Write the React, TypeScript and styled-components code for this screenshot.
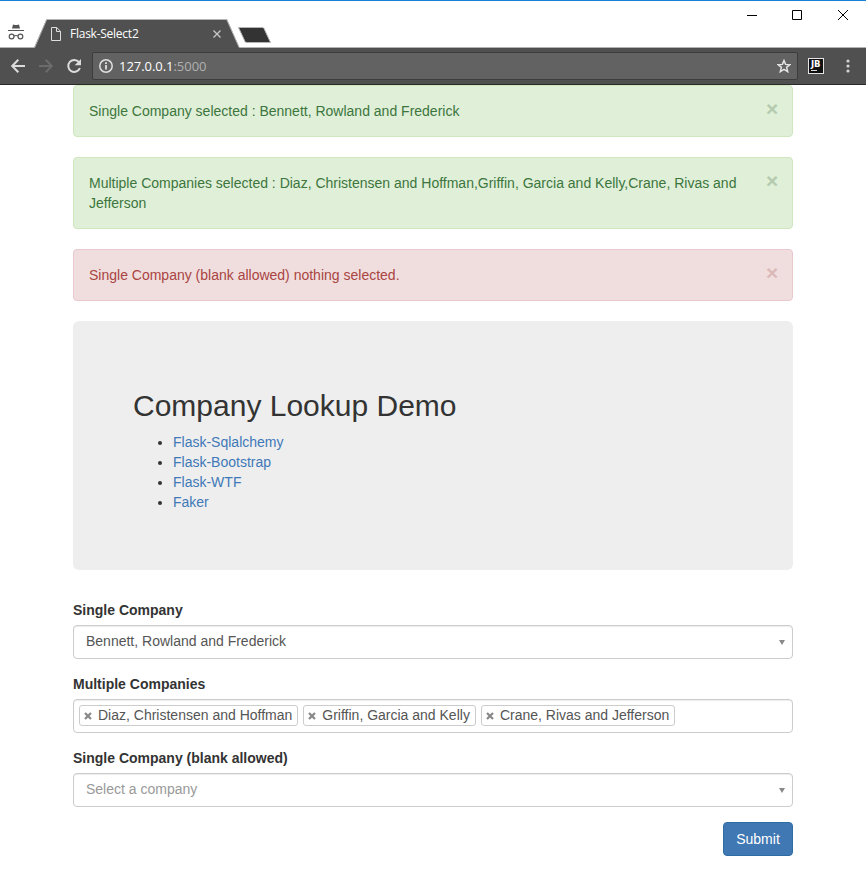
import React from 'react';
import styled, { createGlobalStyle } from 'styled-components';

const GlobalStyle = createGlobalStyle`
  *, *::before, *::after { box-sizing: border-box; }
  body {
    margin: 0;
    background: #fff;
    color: #333;
    font: 14px/20px "Liberation Sans", Arial, sans-serif;
  }
`;

/* ---------- Browser window ---------- */

const Window = styled.div`
  width: 866px;
  height: 877px;
  overflow: hidden;
  background: #fff;
`;

const TitleBar = styled.header`
  display: flex;
  align-items: flex-end;
  height: 48px;
  border-top: 1px solid #1a80d6;
  background: linear-gradient(#b2b4b3, #b2b4b3) bottom / 100% 1px no-repeat;
`;

const Incognito = styled.svg`
  flex: none;
  width: 16px;
  height: 17px;
  margin: 0 10px 7px 8px;
`;

const Tab = styled.div`
  position: relative;
  display: flex;
  align-items: center;
  width: 206px;
  height: 29px;
  padding: 0 18px 0 17px;
  color: #fff;
  font: 12px/16px "Open Sans", "Noto Sans", sans-serif;
`;

const TabShape = styled.svg`
  position: absolute;
  inset: 0;
`;

const TabIcon = styled.svg`
  position: relative;
  flex: none;
  width: 10px;
  height: 14px;
`;

const TabTitle = styled.span`
  position: relative;
  flex: 1;
  margin: 0 0 0 9px;
  letter-spacing: -0.25px;
  white-space: nowrap;
`;

const TabClose = styled.svg`
  position: relative;
  flex: none;
  width: 8px;
  height: 8px;
  margin-right: 1px;
`;

const NewTab = styled.svg`
  flex: none;
  width: 36px;
  height: 18px;
  margin: 0 auto 4px -3px;
`;

const WindowControls = styled.div`
  display: flex;
  align-self: flex-start;
  gap: 35px;
  padding: 9px 18px 0 0;
`;

const ControlIcon = styled.svg`
  width: 10px;
  height: 10px;
  &:last-child {
    margin-left: 1px;
  }
`;

const Toolbar = styled.nav`
  display: flex;
  align-items: center;
  height: 37px;
  padding: 0 12px 0 10px;
  background: #505050;
  border-bottom: 1px solid #2b292a;
`;

const NavIcon = styled.svg<{ $gap: number }>`
  flex: none;
  width: 16px;
  height: 16px;
  margin-right: ${(p) => p.$gap}px;
`;

const AddressBar = styled.div`
  display: flex;
  flex: 1;
  align-items: center;
  height: 28px;
  padding: 0 6px;
  border: 1px solid #3c3c3c;
  border-radius: 2px;
  background: #626262;
`;

const Url = styled.span`
  flex: 1;
  margin: -1px 0 0 6px;
  color: #b0b0b0;
  font: 13px/18px "Open Sans", "Noto Sans", sans-serif;
  letter-spacing: -0.04px;
`;

const Host = styled.span`
  color: #fff;
`;

const BarIcon = styled.svg`
  flex: none;
  width: 14px;
  height: 14px;
`;

const Extension = styled.div`
  width: 16px;
  height: 16px;
  margin: 0 22px 0 10px;
  padding: 1px 0 0 2px;
  border: 1px solid #e4e4e4;
  background: #111;
  color: #fff;
  font: bold 8.5px/8px "DejaVu Sans", sans-serif;
  letter-spacing: -0.2px;
  &::after {
    content: '';
    display: block;
    width: 6px;
    height: 1px;
    margin-top: 2px;
    background: #ddd;
  }
`;

const MenuIcon = styled.svg`
  flex: none;
  width: 4px;
  height: 14px;
  margin-right: 4px;
`;

/* ---------- Page ---------- */

const Container = styled.main`
  width: 720px;
  margin: 0 auto;
`;

const tones = {
  success: { text: '#3c763d', fill: '#e0efd8', line: '#d0e6bf', close: '#b5cbaf' },
  danger: { text: '#a94442', fill: '#f0dede', line: '#e9c8ce', close: '#dcb9b9' },
};

type Tone = keyof typeof tones;

const AlertBox = styled.div<{ $tone: Tone }>`
  display: flex;
  justify-content: space-between;
  align-items: flex-start;
  margin-bottom: 20px;
  padding: 15px 14px 15px 15px;
  border: 1px solid ${(p) => tones[p.$tone].line};
  border-radius: 4px;
  background: ${(p) => tones[p.$tone].fill};
  color: ${(p) => tones[p.$tone].text};
`;

const AlertText = styled.span`
  width: 655px;
`;

const DismissButton = styled.button<{ $tone: Tone }>`
  width: 12px;
  height: 21px;
  margin: -3px 0 -6px;
  padding: 0;
  border: 0;
  background: transparent;
  color: ${(p) => tones[p.$tone].close};
  font: bold 21px/21px "Liberation Sans", Arial, sans-serif;
`;

const Jumbotron = styled.section`
  margin-bottom: 30px;
  padding: 48px 60px;
  border-radius: 6px;
  background: #eee;
`;

const Heading = styled.h2`
  margin: 20px 0 10px;
  font-size: 30px;
  font-weight: 400;
  line-height: 33px;
`;

const LinkList = styled.ul`
  margin: 0 0 10px;
  padding-left: 40px;
`;

const Link = styled.a`
  color: #3f79b8;
  text-decoration: none;
`;

const Field = styled.div`
  margin-bottom: 15px;
`;

const Label = styled.label`
  display: block;
  margin-bottom: 5px;
  font-weight: 700;
`;

const SelectBox = styled.div<{ $multiple?: boolean; $empty?: boolean }>`
  display: flex;
  align-items: center;
  gap: 5px;
  height: 34px;
  padding: ${(p) => (p.$multiple ? '0 5px 1px' : '0 7px 2px 12px')};
  border: 1px solid #ccc;
  border-radius: 4px;
  box-shadow: inset 0 1px 1px rgba(0, 0, 0, 0.075);
  color: ${(p) => (p.$empty ? '#999' : '#555')};
`;

const Value = styled.span`
  flex: 1;
`;

const Caret = styled.span`
  margin-top: 2px;
  border: 3px solid transparent;
  border-top: 5px solid #888;
  border-bottom: 0;
`;

const Chip = styled.span`
  display: flex;
  align-items: center;
  height: 21px;
  padding: 0 5px 1px 4px;
  border: 1px solid #ccc;
  border-radius: 3px;
  white-space: nowrap;
`;

const ChipRemove = styled.svg`
  width: 8px;
  height: 8px;
  margin: 2px 6px 0 0;
`;

const Actions = styled.div`
  display: flex;
  justify-content: flex-end;
`;

const SubmitButton = styled.button`
  width: 70px;
  height: 34px;
  padding: 0;
  border: 1px solid #2e6da4;
  border-radius: 4px;
  background: #4078b4;
  color: #fff;
  font: 14px/20px "Liberation Sans", Arial, sans-serif;
`;

function BrowserChrome() {
  return (
    <>
      <TitleBar>
        <Incognito viewBox="0 0 16 17" fill="none" stroke="#555">
          <path d="M4 4.500 5 .500 7 .900 8 1l1-.100 2-.400 1 4Z" fill="#555" stroke="none" />
          <path d="M0 6.500h16" />
          <circle cx="3.600" cy="12.500" r="2.400" strokeWidth="1.200" />
          <circle cx="12.400" cy="12.500" r="2.400" strokeWidth="1.200" />
          <path d="M6 12q2-1 4 0" strokeWidth="1.200" />
        </Incognito>
        <Tab>
          <TabShape width="206" height="29" viewBox="0 0 206 29">
            <path d="M0 29 12.500.500H193L205.500 29Z" fill="#505050" />
            <path d="M0 28.500h.700L12.700.500H192.700L205.200 28.500" fill="none" stroke="#b2b4b3" />
          </TabShape>
          <TabIcon viewBox="0 0 10 14" fill="none" stroke="#ddd">
            <path d="M.5.5h5.200l3.800 3.800v9.200h-9ZM5.500.500v4h4" />
          </TabIcon>
          <TabTitle>Flask-Select2</TabTitle>
          <TabClose viewBox="0 0 8 8" stroke="#c9c9c9" strokeWidth="1.300">
            <path d="m.5.5 7 7M7.500.500l-7 7" />
          </TabClose>
        </Tab>
        <NewTab viewBox="0 0 36 18">
          <path d="M1.500 1.500H25q1.500 0 2 1L33.500 16.500H10q-1.500 0-2-1Z" fill="#333" stroke="#b2b4b3" />
        </NewTab>
        <WindowControls>
          <ControlIcon viewBox="0 0 10 10" stroke="#000">
            <path d="M0 5.500h10" />
          </ControlIcon>
          <ControlIcon viewBox="0 0 10 10" fill="none" stroke="#000">
            <path d="M.5.5h9v9h-9Z" />
          </ControlIcon>
          <ControlIcon viewBox="0 0 10 10" stroke="#000">
            <path d="m0 0 10 10M10 0 0 10" />
          </ControlIcon>
        </WindowControls>
      </TitleBar>
      <Toolbar>
        <NavIcon $gap={12} viewBox="0 0 16 16" fill="none" stroke="#dcdcdc" strokeWidth="2">
          <path d="M15 8H2.500M8.300 1.800 2.200 8l6.100 6.200" />
        </NavIcon>
        <NavIcon $gap={12} viewBox="0 0 16 16" fill="none" stroke="#6c6c6c" strokeWidth="2">
          <path d="M1 8h12.500M7.700 1.800 13.800 8l-6.100 6.200" />
        </NavIcon>
        <NavIcon $gap={10} viewBox="0 0 16 16">
          <path d="M13 4.200A6 6 0 1 0 13.900 10" fill="none" stroke="#dcdcdc" strokeWidth="2" />
          <path d="M15 1v6.300H8.700Z" fill="#dcdcdc" />
        </NavIcon>
        <AddressBar>
          <BarIcon viewBox="0 0 14 14" fill="none" stroke="#e0e0e0">
            <circle cx="7" cy="7" r="6.200" strokeWidth="1.500" />
            <path d="M7 6v4.500M7 3.300v1.600" strokeWidth="1.800" />
          </BarIcon>
          <Url>
            <Host>127.0.0.1</Host>:5000
          </Url>
          <BarIcon viewBox="0 0 14 14" fill="none" stroke="#e4e4e4" strokeWidth="1.500">
            <path d="m7 1.500 1.600 3.900 4.300.300-3.300 2.700 1.100 4.200L7 10.300l-3.700 2.300 1.100-4.200L1.100 5.700l4.300-.300Z" />
          </BarIcon>
        </AddressBar>
        <Extension>JB</Extension>
        <MenuIcon viewBox="0 0 4 14" fill="#d4d4d4">
          <circle cx="2" cy="2" r="1.600" />
          <circle cx="2" cy="7" r="1.600" />
          <circle cx="2" cy="12" r="1.600" />
        </MenuIcon>
      </Toolbar>
    </>
  );
}

function Alert({ tone, children }: { tone: Tone; children: React.ReactNode }) {
  return (
    <AlertBox $tone={tone}>
      <AlertText>{children}</AlertText>
      <DismissButton $tone={tone}>×</DismissButton>
    </AlertBox>
  );
}

const links = ['Flask-Sqlalchemy', 'Flask-Bootstrap', 'Flask-WTF', 'Faker'];
const companies = ['Diaz, Christensen and Hoffman', 'Griffin, Garcia and Kelly', 'Crane, Rivas and Jefferson'];

export default function App() {
  return (
    <Window>
      <GlobalStyle />
      <BrowserChrome />
      <Container>
        <Alert tone="success">Single Company selected : Bennett, Rowland and Frederick</Alert>
        <Alert tone="success">
          Multiple Companies selected : Diaz, Christensen and Hoffman,Griffin, Garcia and Kelly,Crane, Rivas and
          Jefferson
        </Alert>
        <Alert tone="danger">Single Company (blank allowed) nothing selected.</Alert>
        <Jumbotron>
          <Heading>Company Lookup Demo</Heading>
          <LinkList>
            {links.map((name) => (
              <li key={name}>
                <Link>{name}</Link>
              </li>
            ))}
          </LinkList>
        </Jumbotron>
        <Field>
          <Label>Single Company</Label>
          <SelectBox>
            <Value>Bennett, Rowland and Frederick</Value>
            <Caret />
          </SelectBox>
        </Field>
        <Field>
          <Label>Multiple Companies</Label>
          <SelectBox $multiple>
            {companies.map((name) => (
              <Chip key={name}>
                <ChipRemove viewBox="0 0 8 8" stroke="#888" strokeWidth="2.200">
                  <path d="m1 1 6 6M7 1 1 7" />
                </ChipRemove>
                {name}
              </Chip>
            ))}
          </SelectBox>
        </Field>
        <Field>
          <Label>Single Company (blank allowed)</Label>
          <SelectBox $empty>
            <Value>Select a company</Value>
            <Caret />
          </SelectBox>
        </Field>
        <Actions>
          <SubmitButton>Submit</SubmitButton>
        </Actions>
      </Container>
    </Window>
  );
}
